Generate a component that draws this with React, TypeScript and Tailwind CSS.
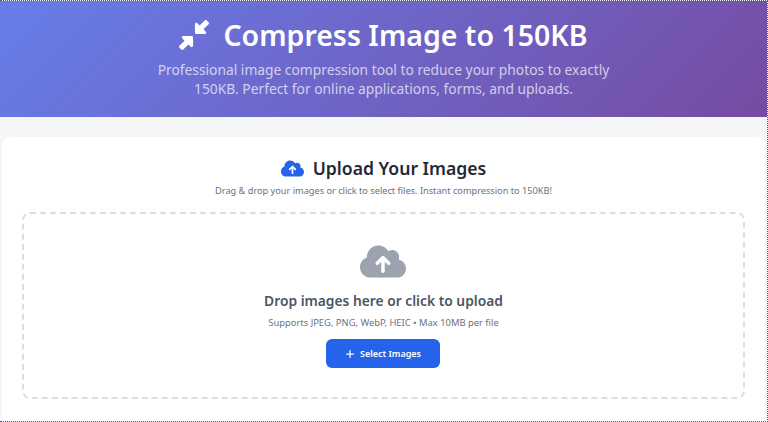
import { FaCloudArrowUp, FaDownLeftAndUpRightToCenter, FaPlus } from 'react-icons/fa6';

export default function App() {
  return (
    <div className="h-[422px] w-[768px] overflow-hidden border-t border-r border-b border-dotted border-[#555b6e] bg-[#f5f6f8] font-['Noto_Sans','Open_Sans',sans-serif]">
      <header className="flex h-[116px] flex-col items-center bg-[linear-gradient(135deg,#667eea_0%,#764ba2_100%)] pt-[14px] text-white">
        <h1 className="flex h-[40px] items-center gap-[14px] text-[28.5px] leading-[40px] font-semibold">
          <FaDownLeftAndUpRightToCenter className="h-[30px] w-[30px]" />
          Compress Image to 150KB
        </h1>
        <p className="mt-[5px] w-[480px] text-center text-[13.8px] leading-[19px] text-white/70">
          Professional image compression tool to reduce your photos to exactly 150KB. Perfect for online applications, forms, and uploads.
        </p>
      </header>

      <main className="px-[2px] pt-[20px]">
        <section className="h-[300px] w-[763px] rounded-lg bg-white px-[20px] pt-[17px]">
          <h2 className="flex h-[28px] items-center justify-center gap-[9px] text-[17.6px] leading-[28px] font-semibold text-[#1f2937]">
            <FaCloudArrowUp className="h-[19px] w-[23px] text-[#2563eb]" />
            Upload Your Images
          </h2>
          <p className="mt-[2px] text-center text-[9.2px] leading-[14px] text-[#6b7280]">
            Drag &amp; drop your images or click to select files. Instant compression to 150KB!
          </p>

          <div className="mt-[14px] flex h-[187px] flex-col items-center rounded-lg border-2 border-dashed border-[#d8dfe9] pt-[29px]">
            <FaCloudArrowUp className="mr-[1px] h-[37px] w-[46px] text-[#9ca3af]" />
            <p className="mt-[11px] text-[13.8px] leading-[20px] font-semibold text-[#4b5563]">Drop images here or click to upload</p>
            <p className="mt-[5px] text-[9.4px] leading-[14px] text-[#6b7280]">Supports JPEG, PNG, WebP, HEIC • Max 10MB per file</p>
            <button className="mt-[9px] mr-[1px] flex h-[29px] w-[114px] items-center justify-center gap-[5px] rounded-md bg-[#2563eb] text-[9px] font-semibold text-white">
              <FaPlus className="h-[10px] w-[10px]" />
              Select Images
            </button>
          </div>
        </section>
      </main>
    </div>
  );
}
